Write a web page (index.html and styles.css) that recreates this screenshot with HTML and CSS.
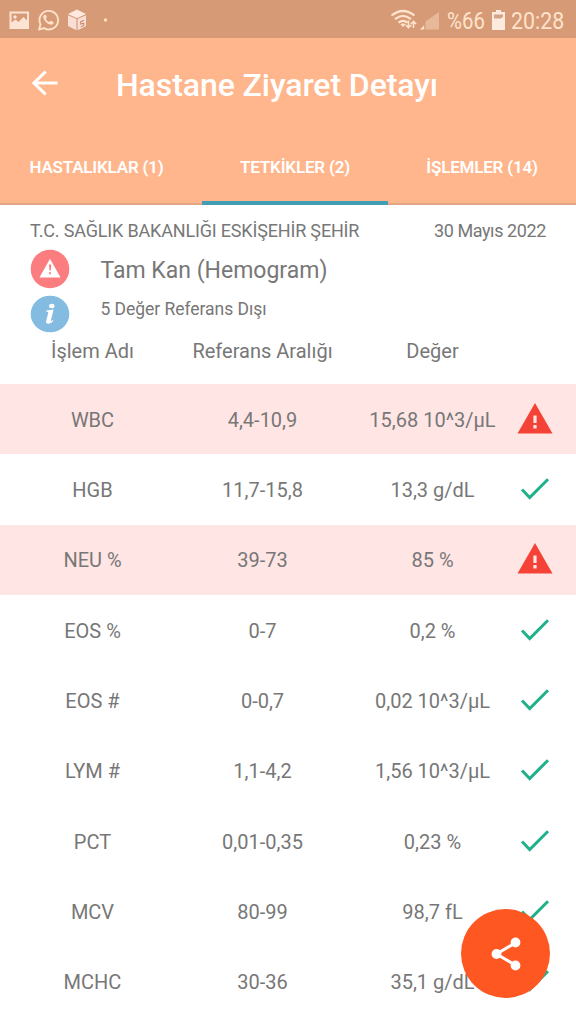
FILE: index.html
```html
<!DOCTYPE html>
<html lang="tr">
<head>
<meta charset="utf-8">
<title>Hastane Ziyaret Detayı</title>
<link rel="stylesheet" href="styles.css">
</head>
<body>
<svg class="defs" aria-hidden="true">
  <symbol id="warn" viewBox="0 0 36 31"><path d="M18 0 35.500 30.500H.5Z" fill="#f44336"/><path d="M16.400 12.500h3.200v7.500h-3.200zM16.400 22h3.200v3.500h-3.200z" fill="#ffe5e4"/></symbol>
  <symbol id="check" viewBox="0 0 30 24"><path d="M2 12.500 9.700 20.500 28 2.200" fill="none" stroke="#1fb18a" stroke-width="3"/></symbol>
</svg>
<div class="screen">
  <div class="status">
    <svg class="status-left" width="120" height="38" viewBox="0 0 120 38">
      <path fill="#fde3d3" fill-rule="evenodd" d="M9.500 11.500h19.500v17.500H9.500zM11.500 13.500v9l4-3 3 2.500 5-5 3.500 3.500v-7z"/>
      <circle cx="15" cy="17" r="1.700" fill="#fde3d3"/>
      <path d="M39 29.500 40.500 24.300A9.300 9.300 0 1 1 44 28.100Z" fill="none" stroke="#ffe0c8" stroke-width="1.900" stroke-linejoin="round"/>
      <path d="M44.700 14.800c-2 .8-1.800 3-.6 5 1.800 3 4.300 4.900 7 4.900 1.600 0 2.700-1.200 2.500-2.500l-2.800-1.500-1.600 1.400c-1.600-.8-2.700-1.900-3.400-3.400l1.200-1.400-1.200-2.500z" fill="#ffe0c8"/>
      <path d="M77 9.500 86 14 77 18.200 68 14Z" fill="#fde9e0"/>
      <path d="M68 15.200 76.400 19v11.300L68 26ZM86 15.200 77.600 19v11.300L86 26Z" fill="#f9ded4"/>
      <path d="M84 20.200 80.700 21.700V24l3-.8v2.300l-3 1.200" fill="none" stroke="#c98d71" stroke-width="1.100"/>
      <circle cx="105.500" cy="20" r="1.700" fill="#ffe0b8"/>
    </svg>
    <svg class="signal" width="50" height="38" viewBox="390 0 50 38">
      <g fill="none" stroke="#ffe3cb" stroke-width="2.200"><path d="M391.500 15.500Q403 6.500 414.500 15.500"/><path d="M395 19.200Q403 12.600 411 19.200"/><path d="M398.500 22.700Q403 19 407.500 22.700"/></g>
      <path d="M400.300 24.300Q403 22.500 405.700 24.300L403 27Z" fill="#ffe3cb"/>
      <path d="M408.500 20.500v7M405.800 25l2.700 2.700 2.700-2.700M413.500 28v-6.500M410.900 24l2.600-2.700 2.600 2.700" fill="none" stroke="#ffe3cb" stroke-width="1.600"/>
      <path d="M439 12V29.500H425.500V21.500Z" fill="#e8b998"/><path d="M424.200 25.200V29.500H420Z" fill="#ffe3cb"/>
    </svg>
    <span class="pct"><span>%66</span></span>
    <svg class="battery" width="13" height="38" viewBox="0 0 13 38"><path d="M4 10h5v2h4v18H0V12h4z" fill="#fdeadf"/><path d="M2 14.500h9v2l-2 2H2z" fill="#d6a284"/></svg>
    <span class="clock"><span>20:28</span></span>
  </div>
  <header class="head">
    <div class="bar">
      <svg class="back" width="26" height="26" viewBox="0 0 26 26"><path d="M25.500 13H2.500M13.700 1.500 2 13 13.700 24.500" fill="none" stroke="#fff" stroke-width="3.100"/></svg>
      <h1 class="title">Hastane Ziyaret Detayı</h1>
    </div>
    <nav class="tabs">
      <div class="tab first">HASTALIKLAR (1)</div>
      <div class="tab active">TETKİKLER (2)</div>
      <div class="tab last">İŞLEMLER (14)</div>
    </nav>
  </header>
  <section class="visit">
    <div class="place"><span class="hospital">T.C. SAĞLIK BAKANLIĞI ESKİŞEHİR ŞEHİR</span><span class="date">30 Mayıs 2022</span></div>
    <div class="line">
      <svg width="40" height="40" viewBox="0 0 40 40"><circle cx="20" cy="20" r="19.300" fill="#fb7d7f"/><path d="M20 9.700 30.500 28.500h-21Z" fill="#fff"/><path d="M19 15.500h2.200l-.4 6h-1.400zM19.100 23.200h1.900v2h-1.900z" fill="#fb7d7f"/></svg>
      <span class="test">Tam Kan (Hemogram)</span>
    </div>
    <div class="line info">
      <svg width="40" height="38" viewBox="0 0 40 38"><ellipse cx="20" cy="19" rx="19.300" ry="18.300" fill="#84bbe0"/><ellipse cx="21.800" cy="11" rx="2.700" ry="2.200" fill="#fff"/><path d="M16.200 15.500 23.600 14.600 20.900 25.300q-.2 1.400 1.700-.2l.8.600q-2.300 3-5.200 3.100-2.700 0-2-3l2.100-8q.3-1.200-1.900-1.400z" fill="#fff"/></svg>
      <span class="outside">5 Değer Referans Dışı</span>
    </div>
  </section>
  <div class="grid labels"><span class="name">İşlem Adı</span><span class="ref">Referans Aralığı</span><span>Değer</span></div>
  <main class="rows">
    <div class="grid row bad"><span>WBC</span><span>4,4-10,9</span><span>15,68 10^3/µL</span><svg class="warn"><use href="#warn"/></svg></div>
    <div class="grid row"><span>HGB</span><span>11,7-15,8</span><span>13,3 g/dL</span><svg class="check"><use href="#check"/></svg></div>
    <div class="grid row bad"><span>NEU %</span><span>39-73</span><span>85 %</span><svg class="warn"><use href="#warn"/></svg></div>
    <div class="grid row"><span>EOS %</span><span>0-7</span><span>0,2 %</span><svg class="check"><use href="#check"/></svg></div>
    <div class="grid row"><span>EOS #</span><span>0-0,7</span><span>0,02 10^3/µL</span><svg class="check"><use href="#check"/></svg></div>
    <div class="grid row"><span>LYM #</span><span>1,1-4,2</span><span>1,56 10^3/µL</span><svg class="check"><use href="#check"/></svg></div>
    <div class="grid row"><span>PCT</span><span>0,01-0,35</span><span>0,23 %</span><svg class="check"><use href="#check"/></svg></div>
    <div class="grid row"><span>MCV</span><span>80-99</span><span>98,7 fL</span><svg class="check"><use href="#check"/></svg></div>
    <div class="grid row"><span>MCHC</span><span>30-36</span><span>35,1 g/dL</span><svg class="check"><use href="#check"/></svg></div>
  </main>
  <div class="fab"><svg width="30" height="34" viewBox="0 0 30 34"><path d="M25 5.500 5.500 17 25 28.500" fill="none" stroke="#fff" stroke-width="3"/><g fill="#fff"><circle cx="24.500" cy="5.500" r="4.900"/><circle cx="5.500" cy="17" r="4.900"/><circle cx="24.500" cy="28.500" r="4.900"/></g></svg></div>
</div>
</body>
</html>
```
FILE: styles.css
```css
* { box-sizing: border-box; }
body { margin: 0; background: #fff; color: #777; font-family: Roboto, "Noto Sans", sans-serif; }
svg { display: block; flex: none; }
.defs { position: absolute; width: 0; height: 0; }
.screen { position: relative; width: 576px; height: 1024px; overflow: hidden; background: #fff; }
.status { display: flex; height: 38px; background: #d69a77; color: #ffe3cb; font-size: 24px; line-height: 42px; white-space: nowrap; }
.signal { margin-left: 270px; }
.pct { width: 38px; margin-left: 7px; }
.pct span, .clock span { display: inline-block; transform: scaleX(.85); transform-origin: 0 50%; }
.clock span { transform: scaleX(.89); }
.battery { margin-left: 7px; }
.clock { margin-left: 6px; width: 54px; }
.head { height: 167px; background: #ffb68c; color: #fff; border-bottom: 2px solid #e3a684; }
.bar { display: flex; align-items: center; height: 92px; padding-left: 32px; }
.back { margin-bottom: 2px; }
.title { margin: 2px 0 0 58px; font-size: 32px; font-weight: 500; line-height: 40px; letter-spacing: -.08px; white-space: nowrap; }
.tabs { display: grid; grid-template-columns: 202px 186px 188px; height: 75px; }
.tab { padding-top: 25px; text-align: center; font-size: 17px; font-weight: 600; line-height: 24px; letter-spacing: -.2px; white-space: nowrap; }
.first { padding-right: 9px; }
.active { border-bottom: 4px solid #439db5; }
.visit { height: 129px; padding: 13px 30px 0; }
.place { display: flex; justify-content: space-between; height: 30px; font-size: 18px; line-height: 26px; white-space: nowrap; }
.hospital { letter-spacing: -.17px; }
.date { letter-spacing: -.4px; }
.line { display: flex; height: 46px; gap: 31px; margin-top: 1px; }
.line svg { margin-left: -.5px; }
.info { margin-top: 0; }
.test { font-size: 23px; line-height: 43px; }
.outside { font-size: 17.5px; line-height: 29px; letter-spacing: -.04px; }
.grid { display: grid; grid-template-columns: 170px 170px 170px 34px; padding-left: 7.5px; align-items: center; justify-items: center; font-size: 20px; white-space: nowrap; }
.labels { height: 50px; padding-bottom: 16px; }
.row { height: 70.35px; }
.row span { padding-top: 1px; }
.bad { background: #ffe5e4; }
.warn { width: 36px; height: 31px; margin-bottom: 2px; }
.check { width: 30px; height: 24px; margin-bottom: 1px; }
.fab { position: absolute; left: 461px; top: 909px; width: 89px; height: 89px; border-radius: 50%; background: #ff5722; display: flex; align-items: center; justify-content: center; }
```
